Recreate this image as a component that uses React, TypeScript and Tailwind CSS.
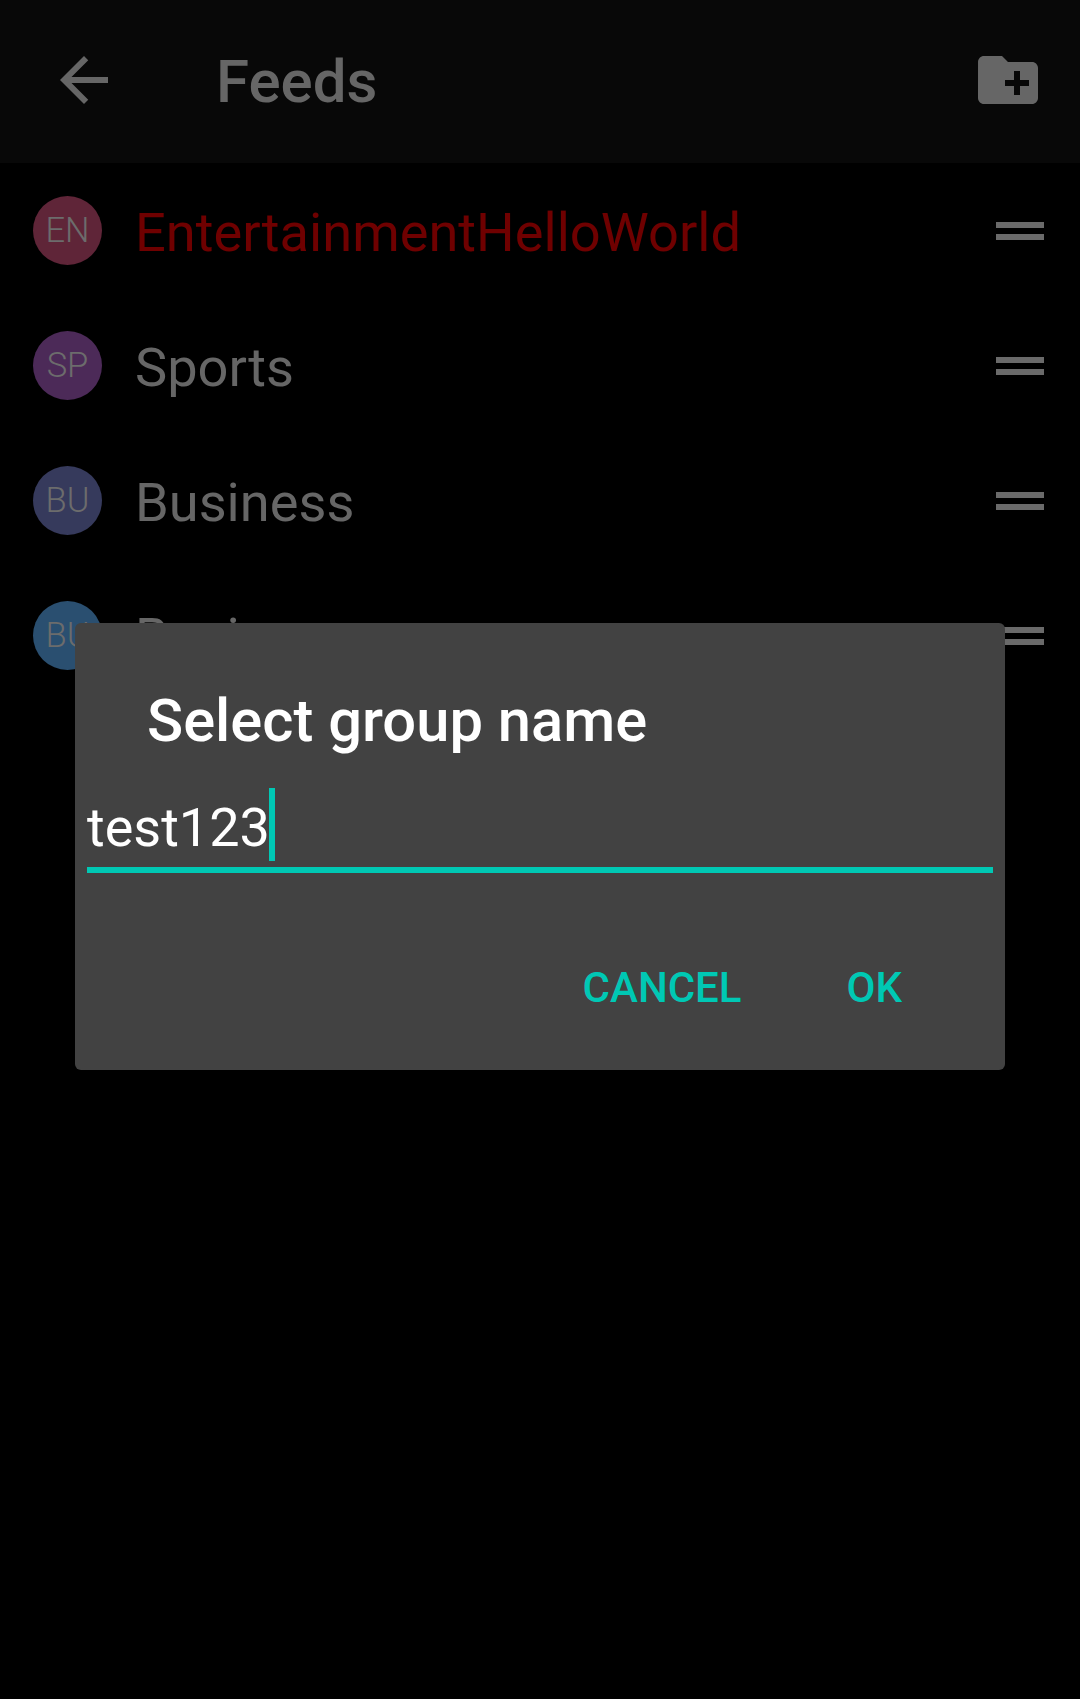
const roboto = "font-['Roboto','Liberation_Sans',sans-serif]";

type Feed = { initials: string; name: string; color: string; text: string };

const feeds: Feed[] = [
  { initials: "EN", name: "EntertainmentHelloWorld", color: "bg-[#5f2538]", text: "text-[#6f0000]" },
  { initials: "SP", name: "Sports", color: "bg-[#4c2a58]", text: "text-[#666666]" },
  { initials: "BU", name: "Business", color: "bg-[#363a5c]", text: "text-[#666666]" },
  { initials: "BU", name: "Business", color: "bg-[#2a4f70]", text: "text-[#666666]" },
];

function FeedRow({ feed }: { feed: Feed }) {
  return (
    <li className="flex h-[135px] items-center pl-[33px] pr-[36px]">
      <span
        className={`flex h-[69px] w-[69px] shrink-0 items-center justify-center rounded-full text-[34.5px] font-light text-[#6c6c6c] ${feed.color}`}
      >
        {feed.initials}
      </span>
      <span className={`ml-[33px] flex-1 pt-[5px] text-[54.2px] leading-none ${feed.text}`}>{feed.name}</span>
      <span className="flex w-[48px] shrink-0 flex-col gap-[6px]">
        <span className="h-[6px] bg-[#6a6a6a]" />
        <span className="h-[6px] bg-[#6a6a6a]" />
      </span>
    </li>
  );
}

export default function App() {
  return (
    <div className={`relative h-[1699px] w-[1080px] overflow-hidden bg-black ${roboto}`}>
      <header className="flex h-[163px] items-center bg-[#080808] pb-[3px] pl-[48px] pr-[36px]">
        <svg viewBox="0 0 24 24" className="h-[72px] w-[72px] shrink-0 fill-[#666666]">
          <path d="M20 11H7.83l5.59-5.59L12 4l-8 8 8 8 1.41-1.41L7.83 13H20v-2z" />
        </svg>
        <h1 className="ml-[96px] flex-1 pt-[4px] text-[60px] font-medium leading-none text-[#666666]">Feeds</h1>
        <svg viewBox="0 0 24 24" className="h-[72px] w-[72px] shrink-0 fill-[#666666]">
          <path d="M20 6h-8l-2-2H4c-1.11 0-1.99.89-1.99 2L2 18c0 1.11.89 2 2 2h16c1.11 0 2-.89 2-2V8c0-1.11-.89-2-2-2zm-1 8h-3v3h-2v-3h-3v-2h3V9h2v3h3v2z" />
        </svg>
      </header>

      <ul>
        {feeds.map((feed, i) => (
          <FeedRow key={i} feed={feed} />
        ))}
      </ul>

      {/* group name dialog, sits over the list */}
      <div className="absolute left-[75px] top-[623px] flex h-[447px] w-[930px] flex-col rounded-[6px] bg-[#424242] px-[12px]">
        <h2 className="mt-[63px] pl-[60px] text-[59.7px] font-medium leading-[70px] text-white">Select group name</h2>
        <div className="mt-[32px] flex h-[85px] items-start border-b-[6px] border-[#00c8b4]">
          <span className="pt-[8px] text-[54px] leading-[64px] text-white">test123</span>
          <span className="h-[73px] w-[6px] -translate-x-[1px] bg-[#00c8b4]" />
        </div>
        <div className="mt-[94px] flex justify-end gap-[105px] pr-[91px] text-[42px] font-medium leading-none text-[#00c8b4]">
          <button>CANCEL</button>
          <button>OK</button>
        </div>
      </div>
    </div>
  );
}
